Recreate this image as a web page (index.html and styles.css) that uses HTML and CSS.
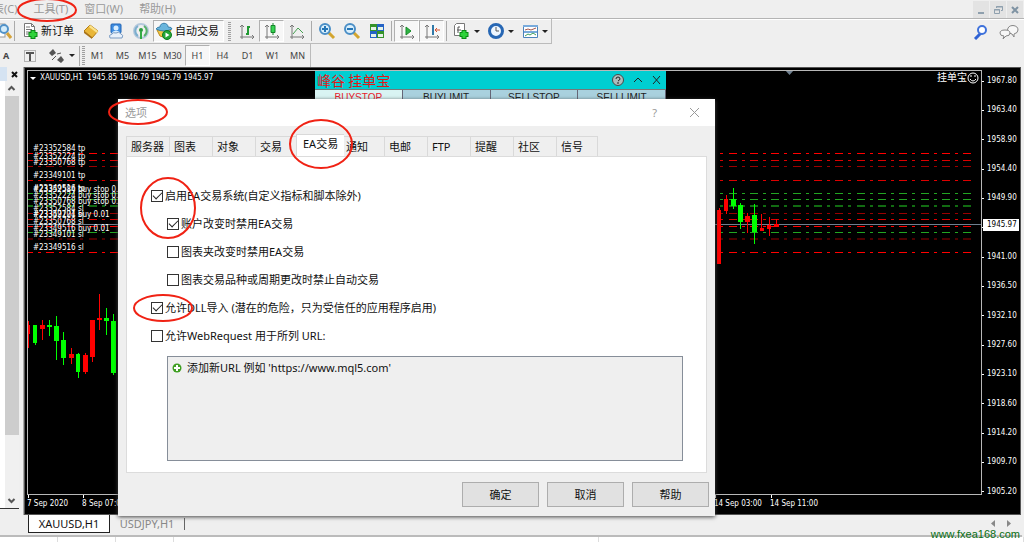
FILE: index.html
```html
<!DOCTYPE html>
<html lang="zh-CN">
<head>
<meta charset="utf-8">
<title>XAUUSD,H1</title>
<link rel="stylesheet" href="styles.css">
</head>
<body>
<div class="app">
  <nav class="menubar">
    <button class="menu menu-cut">表(C)</button>
    <button class="menu">工具(T)</button>
    <button class="menu">窗口(W)</button>
    <button class="menu">帮助(H)</button>
    <div class="window-controls">
      <button aria-label="最小化"><svg width="16" height="16"><path d="M5 11h6" stroke="#8fa0ae" stroke-width="2"/></svg></button>
      <button aria-label="还原"><svg width="16" height="16" fill="none" stroke="#8fa0ae"><path d="M6.500 6V4.500h6v4H11M6 5h7" /><path d="M4.500 7.500h5v4h-5zM4 8h6"/></svg></button>
      <button aria-label="关闭"><svg width="16" height="16"><path d="M5 5l6 6M11 5l-6 6" stroke="#7f93a3" stroke-width="2"/></svg></button>
    </div>
  </nav>

  <div class="toolbars">
    <div class="toolbar toolbar-main">
      <button class="tool tool-cut" aria-label="查找"><svg width="16" height="18"><rect x="0" y="2" width="9" height="13" fill="#fff" stroke="#999"/><circle cx="8" cy="7" r="4" fill="#d4ecfa" stroke="#5292c8" stroke-width="2"/><path d="M11 11l4 5" stroke="#d5a33a" stroke-width="3"/></svg></button>
      <span class="divider"></span>
      <button class="tool-text"><svg width="16" height="18"><path d="M1.500 1.500h7l3 3v10h-10z" fill="#fff" stroke="#777"/><path d="M8.500 1.500v3h3M3 5h4M3 7.500h6M3 10h5M3 12h3" stroke="#777" fill="none"/><path d="M10 8v9M5.500 12.500h9" stroke="#0b8a16" stroke-width="5"/><path d="M10 9v7M6.500 12.500h7" stroke="#2fd33b" stroke-width="3"/></svg>新订单</button>
      <button class="tool" aria-label="历史"><svg width="18" height="18"><path d="M2 9l6-6 8 6-6 7z" fill="#e9b638" stroke="#b37d14"/><path d="M8 3l8 6-1 2-8-6z" fill="#fbe38c"/><path d="M2 9l8 6v2l-8-6z" fill="#a87318"/></svg></button>
      <button class="tool" aria-label="用户"><svg width="18" height="18"><rect x="4" y="2" width="10" height="9" rx="1" fill="#3f8de0" stroke="#2365b5"/><circle cx="9" cy="6" r="2.500" fill="#d9eeff"/><path d="M5 11c1-3 7-3 8 0z" fill="#d9eeff"/><path d="M3 16q-2-3 2-4 1-2 4-1 3-2 5 1 3 1 1 4z" fill="#e9f1fa" stroke="#7a9bc2"/></svg></button>
      <button class="tool" aria-label="信号"><svg width="18" height="18" fill="none"><circle cx="9" cy="9" r="7" stroke="#b4c8dc" stroke-width="2"/><path d="M6 14a6 6 0 010-10" stroke="#7cafce" stroke-width="2"/><path d="M12 4a6 6 0 010 10" stroke="#58b06b" stroke-width="2"/><circle cx="9" cy="8" r="2" fill="#2a9b3e"/><path d="M9 9v8" stroke="#35ab45" stroke-width="2"/></svg></button>
      <button class="tool-text pressed"><svg width="18" height="18"><path d="M2 8l3 6 6 2 5-8z" fill="#f2c743" stroke="#bb8a1b"/><path d="M1 7q1-2 4-2c0-5 8-5 8 0q4 0 4 2-8 4-16 0z" fill="#69b5dc" stroke="#367fab"/><circle cx="12" cy="13" r="4.500" fill="#26a637" stroke="#0d7c1e"/><path d="M10.500 10.500l4 2.500-4 2.500z" fill="#fff"/></svg>自动交易</button>
      <span class="grip"></span>
      <button class="tool" aria-label="柱状图"><svg width="18" height="18" fill="none"><path d="M4 3v12h12M2 5l2-2 2 2M14 13l2 2-2 2M2 15h2v2" stroke="#777"/><path d="M8 12h2V5h2" stroke="#229a33" stroke-width="2"/></svg></button>
      <button class="tool pressed" aria-label="蜡烛图"><svg width="18" height="18" fill="none"><path d="M4 3v12h12M2 5l2-2 2 2M14 13l2 2-2 2M2 15h2v2" stroke="#777"/><path d="M10 1v12" stroke="#16852a"/><path d="M8 3.500h4v7H8z" fill="#35d452" stroke="#16852a"/></svg></button>
      <button class="tool" aria-label="折线图"><svg width="18" height="18" fill="none"><path d="M4 3v12h12M2 5l2-2 2 2M14 13l2 2-2 2M2 15h2v2" stroke="#777"/><path d="M5 12l5-6 5 5" stroke="#43a04f"/></svg></button>
      <span class="divider"></span>
      <button class="tool" aria-label="放大"><svg width="18" height="18"><path d="M10 10l6 6" stroke="#d3a52f" stroke-width="3"/><circle cx="7" cy="7" r="5" fill="#d9effc" stroke="#4a8ec6" stroke-width="2"/><path d="M4 7h6M7 4v6" stroke="#2475b6" stroke-width="2"/></svg></button>
      <button class="tool" aria-label="缩小"><svg width="18" height="18"><path d="M10 10l6 6" stroke="#d3a52f" stroke-width="3"/><circle cx="7" cy="7" r="5" fill="#d9effc" stroke="#4a8ec6" stroke-width="2"/><path d="M4 7h6" stroke="#2475b6" stroke-width="2"/></svg></button>
      <button class="tool" aria-label="平铺"><svg width="18" height="18"><path d="M2 2h7v7H2zM9 9h7v7H9z" fill="#35932a"/><path d="M9 2h7v7H9zM2 9h7v7H2z" fill="#2362c5"/><path d="M3 5h5v3H3zM10 5h5v3h-5zM3 12h5v3H3zM10 12h5v3h-5z" fill="#e4f2e7"/></svg></button>
      <span class="divider"></span>
      <button class="tool pressed" aria-label="自动滚动"><svg width="18" height="18" fill="none"><path d="M4 3v12h12M2 5l2-2 2 2M14 13l2 2-2 2M2 15h2v2" stroke="#777"/><path d="M8 5l5 4-5 4z" fill="#2fb443" stroke="#198a2b"/></svg></button>
      <button class="tool pressed" aria-label="图表平移"><svg width="18" height="18" fill="none"><path d="M4 3v12h12M2 5l2-2 2 2M14 13l2 2-2 2M2 15h2v2" stroke="#777"/><path d="M10 3v10" stroke="#3179a8" stroke-width="2"/><path d="M17 8h-5M14 6l-2 2 2 2" stroke="#d35230"/></svg></button>
      <span class="divider"></span>
      <button class="tool tool-drop" aria-label="指标"><svg width="18" height="18"><path d="M3.500 1.500h8v12h-10v-10z" fill="#fff" stroke="#777"/><path d="M5 11V5h2M4 8h4" stroke="#555" fill="none"/><path d="M11 8v9M6.500 12.500h9" stroke="#0b8a16" stroke-width="5"/><path d="M11 9v7M7.500 12.500h7" stroke="#2fd33b" stroke-width="3"/></svg><i class="caret"></i></button>
      <button class="tool tool-drop" aria-label="周期"><svg width="18" height="18"><circle cx="9" cy="9" r="6.500" fill="#edf6ff" stroke="#2767b4" stroke-width="3"/><path d="M9 5v4h3" stroke="#555" fill="none"/></svg><i class="caret"></i></button>
      <button class="tool tool-drop" aria-label="模板"><svg width="18" height="18" fill="none"><path d="M2.500 3.500h14v12h-14z" fill="#fff" stroke="#4b83bc"/><path d="M2 4h15M3 10h13" stroke="#79abdc" stroke-width="2"/><path d="M4 8l3-1 3 1 5-2" stroke="#a6574b"/><path d="M4 14l3-2 2 1 3-2 3 2" stroke="#3d9e5b"/></svg><i class="caret"></i></button>
      <span class="toolbar-end"></span>
    </div>
    <div class="toolbar-right">
      <button aria-label="搜索"><svg width="16" height="16"><path d="M8 9l-6 6" stroke="#2f62d4" stroke-width="3"/><circle cx="9" cy="6" r="4" fill="#fff" stroke="#3f72db" stroke-width="2"/></svg></button>
      <button aria-label="聊天"><svg width="20" height="16" fill="#f7f7f7" stroke="#858585"><path d="M13 10l2 3v-3q4-1 4-4 0-4-5-4.500-5 0-5.500 4.500 1 4 4.500 4z"/><path d="M5 12l-1 3 3-3q4 0 4-3 0-3-5-3-5 0-5 3 0 3 4 3z"/></svg></button>
    </div>
    <div class="toolbar toolbar-frames">
      <button class="tool tool-cut text-tool">A</button>
      <button class="tool tool-t" aria-label="文本标签"><svg width="16" height="16"><path d="M2.500 2.500h11v11h-11z" fill="none" stroke="#777" stroke-dasharray="1 1"/><path d="M4 5h8M8 5v8" stroke="#555" stroke-width="2"/></svg></button>
      <button class="tool tool-drop" aria-label="箭头"><svg width="18" height="16"><path d="M1 5l4-4 3 4-4 3zM9 12l4-4 3 4-3 3z" fill="#555"/><path d="M9 6l4-1M4 12l4-4" stroke="#555"/></svg><i class="caret"></i></button>
      <span class="divider"></span><span class="grip"></span>
      <button class="frame">M1</button><button class="frame">M5</button><button class="frame">M15</button><button class="frame">M30</button><button class="frame pressed">H1</button><button class="frame">H4</button><button class="frame">D1</button><button class="frame">W1</button><button class="frame">MN</button>
      <span class="toolbar-end"></span>
    </div>
  </div>

  <main class="workspace">
    <aside class="side">
      <div class="side-head"><span></span><button aria-label="关闭面板"><svg width="9" height="9"><path d="M2 2l5 5M7 2L2 7" stroke="#111" stroke-width="2"/></svg></button></div>
      <div class="side-body">
        <div class="scrollbar">
          <svg width="13" height="15"><path d="M3.500 9l3-3 3 3" fill="none" stroke="#555" stroke-width="2"/></svg>
          <div class="thumb"></div>
          <svg width="13" height="15"><path d="M3.500 6l3 3 3-3" fill="none" stroke="#555" stroke-width="2"/></svg>
        </div>
      </div>
      <div class="side-foot"></div>
    </aside>

    <section class="chart">
      <div class="plot">
        <svg class="drawing" aria-hidden="true">
          <g transform="translate(-28 -71)">
            <g class="levels">
              <path class="hi" d="M25 153.500H976M25 226.500H976M25 252.500H976"/>
              <path class="mid" d="M25 160.500H976M25 180.500H976M25 219.500H976"/>
              <path class="low" d="M25 166.500H976M25 213.500H976M25 239H976"/>
              <path class="go" d="M25 193.500H976M25 199.500H976M25 232.500H976"/>
              <path class="go-low" d="M25 206H976"/>
            </g>
            <path d="M27 224.500H982" stroke="#708090"/>
            <g stroke="#f00"><path d="M28.500 321v27M42.500 320v20M71.500 348v16M85.500 353v21M92.500 320v42M99.500 294v36M719.500 208v56M726.500 195v19M747.500 213v20M761.500 214v17M769.500 217v19M776.500 219v8"/></g>
            <path fill="#f00" d="M27 325h3v9h-3zM40 325h5v4h-5zM69 354h5v4h-5zM83 355h5v17h-5zM90 320h5v37h-5zM97 318h5v2h-5zM717 210h4v54h-4zM724 199h4v12h-4zM745 216h5v6h-5zM760 228h4v3h-4zM767 225h4v4h-4zM774 224h5v2h-5z"/>
            <path stroke="#0f0" d="M35.500 325v20M49.500 320v16M56.500 316v44M63.500 332v33M78.500 353v25M106.500 308v27M113.500 314v61M733.500 188v21M740.500 203v26M754.500 204v40"/>
            <path fill="#0f0" d="M33 325h4v18h-4zM47 325h5v2h-5zM54 326h5v15h-5zM61 340h5v18h-5zM76 354h4v18h-4zM104 318h5v3h-5zM111 321h5v52h-5zM731 199h5v7h-5zM738 205h5v17h-5zM752 215h5v17h-5z"/>
            <path d="M785 70h9l-4.500 5z" fill="#708090"/>
            <g class="orders">
              <text x="33" y="151">#23352584 tp</text><text x="33" y="159">#23352224 tp</text><text x="33" y="165">#23350768 tp</text><text x="33" y="178">#23349101 tp</text><text x="33" y="191">#23349516 tp</text><text x="33" y="192">#23352584 buy stop 0.01</text><text x="33" y="198">#23352224 buy stop 0.01</text><text x="33" y="204">#23350768 buy stop 0.01</text><text x="33" y="211">#23352584 sl</text><text x="33" y="217">#23352224 sl</text><text x="33" y="217">#23349101 buy 0.01</text><text x="33" y="224">#23350768 sl</text><text x="33" y="231">#23349516 buy 0.01</text><text x="33" y="237">#23349101 sl</text><text x="33" y="250">#23349516 sl</text>
            </g>
          </g>
        </svg>
        <div class="plot-head">
          <i class="caret caret-white"></i><span>XAUUSD,H1&nbsp; 1945.85 1946.79 1945.79 1945.97</span>
          <span class="expert">挂单宝</span><svg width="12" height="12" fill="none" stroke="#fff"><circle cx="6" cy="6" r="5"/><path d="M4 3v2M8 3v2M3 7q3 4 6 0"/></svg>
        </div>
        <div class="trade-panel">
          <div class="trade-head"><span>峰谷 挂单宝</span>
            <svg width="14" height="14"><circle cx="7" cy="7" r="5.500" fill="#aebcbc" stroke="#484848"/><path d="M5 6q0-2 2-2t2 2q0 1-2 2M7 9v2" fill="none" stroke="#222"/></svg>
            <svg width="10" height="14"><path d="M1 9l4-4 4 4" fill="none" stroke="#222"/></svg>
            <svg width="10" height="14"><path d="M2 3l7 8M9 3l-7 8" fill="none" stroke="#222"/></svg>
          </div>
          <div class="trade-tabs"><button class="current">BUYSTOP</button><button>BUYLIMIT</button><button>SELLSTOP</button><button>SELLLIMIT</button></div>
        </div>
      </div>
      <div class="prices">
        <span>1967.80</span><span>1963.40</span><span>1958.90</span><span>1954.40</span><span>1949.90</span><span>1945.50</span><span>1941.00</span><span>1936.50</span><span>1932.10</span><span>1927.60</span><span>1923.10</span><span>1918.60</span><span>1914.20</span><span>1909.70</span><span>1905.20</span>
        <b class="last-price">1945.97</b>
      </div>
      <div class="times"><span>7 Sep 2020</span><span>8 Sep 07:00</span><span class="time-late">14 Sep 03:00</span><span>14 Sep 11:00</span></div>
    </section>

    <div class="dialog" role="dialog" aria-labelledby="dialog-title">
      <header class="dialog-head">
        <h1 id="dialog-title">选项</h1>
        <button aria-label="帮助说明">?</button>
        <button aria-label="关闭对话框"><svg width="11" height="11"><path d="M1 1l9 9M10 1l-9 9" stroke="#999"/></svg></button>
      </header>
      <div class="dialog-body">
        <div class="tabs" role="tablist">
          <button role="tab">服务器</button><button role="tab">图表</button><button role="tab">对象</button><button role="tab">交易</button><button role="tab" class="current" aria-selected="true">EA交易</button><button role="tab">通知</button><button role="tab">电邮</button><button role="tab">FTP</button><button role="tab">提醒</button><button role="tab">社区</button><button role="tab">信号</button>
        </div>
        <div class="tab-page">
          <label class="option"><input type="checkbox" checked>启用EA交易系统(自定义指标和脚本除外)</label>
          <label class="option nested"><input type="checkbox" checked>账户改变时禁用EA交易</label>
          <label class="option nested"><input type="checkbox">图表夹改变时禁用EA交易</label>
          <label class="option nested"><input type="checkbox">图表交易品种或周期更改时禁止自动交易</label>
          <label class="option"><input type="checkbox" checked>允许DLL导入 (潜在的危险，只为受信任的应用程序启用)</label>
          <label class="option"><input type="checkbox">允许WebRequest 用于所列 URL:</label>
          <div class="url-list"><div class="url-row"><svg width="10" height="10"><circle cx="5" cy="5" r="4.500" fill="#3f9f22"/><path d="M5 2v6M2 5h6" stroke="#fff" stroke-width="2"/></svg>添加新URL 例如 'https://www.mql5.com'</div></div>
        </div>
        <footer class="actions"><button>确定</button><button>取消</button><button>帮助</button></footer>
      </div>
    </div>
  </main>

  <div class="chart-tabs">
    <button class="current">XAUUSD,H1</button><button class="other">USDJPY,H1</button><span class="tab-end"></span>
    <span class="tab-arrows"><svg width="5" height="7"><path d="M5 0v7L1 3.500z" fill="#888"/></svg><svg width="5" height="7"><path d="M0 0v7l4-3.500z" fill="#888"/></svg></span>
  </div>
  <div class="status"><span></span><span></span><span></span><span class="wide"></span><span class="rest"></span></div>

  <svg class="marks" aria-hidden="true">
    <ellipse cx="47" cy="10" rx="29" ry="11"/>
    <ellipse cx="138" cy="112" rx="29" ry="12"/>
    <ellipse cx="321" cy="144" rx="31" ry="24"/>
    <ellipse cx="168" cy="208" rx="27" ry="30"/>
    <ellipse cx="163" cy="308" rx="29" ry="13"/>
  </svg>
  <a class="site" href="#">www.fxea168.com</a>
</div>
</body>
</html>
```
FILE: styles.css
```css
* { box-sizing: border-box; }
body { margin: 0; font: 11px/16px "Noto Sans", "Noto Sans CJK SC", sans-serif; color: #111; background: #efefef; }
button { margin: 0; padding: 0; border: 0; background: none; font: inherit; color: inherit; }
svg { display: block; flex: none; }

.app { position: relative; display: flex; flex-direction: column; height: 100vh; overflow: hidden; }

.menubar { display: flex; gap: 16px; height: 18px; color: #999; }
.menu { white-space: nowrap; }
.menu-cut { margin-left: -7px; }
.window-controls { display: flex; gap: 1px; margin-left: auto; padding: 1px 1px 0 0; }
.window-controls button { background: #e3e3e3; }

.toolbars { display: grid; grid-template-columns: 1fr auto; grid-template-rows: 25px 23px; border-top: 1px solid #b4b4b4; box-shadow: inset 0 1px #fff; }
.toolbar { display: flex; align-items: center; }
.toolbar-main { justify-self: start; border-bottom: 1px solid #bbb; }
.toolbar-frames { grid-column: 1 / -1; font-size: 9px; color: #444; }
.toolbar-right { display: flex; align-items: center; gap: 10px; padding-right: 5px; }
.tool { display: flex; align-items: center; justify-content: center; width: 25px; height: 22px; }
.tool-cut { width: 14px; justify-content: flex-start; margin-left: -4px; }
.tool-cut + .divider { margin-left: 4px; }
.text-tool { margin-left: 0; padding-left: 3px; font-weight: bold; }
.tool-t { width: 31px; }
.tool-drop { width: 34px; gap: 3px; }
.tool-text { display: flex; align-items: center; gap: 2px; height: 22px; padding: 0 4px 0 6px; white-space: nowrap; }
.tool-text.pressed { padding: 0 4px 0 1px; }
.pressed { border: 1px solid; border-color: #b0b0b0 #fff #fff #b0b0b0; background: #f7f7f7; }
.divider { width: 1px; height: 20px; margin: 0 2px; background: #aaa; }
.grip { width: 3px; height: 19px; margin: 0 3px 0 4px; background: repeating-linear-gradient(#a0a0a0 0 1px, #eee 1px 2px); }
.toolbar-end { width: 1px; align-self: stretch; background: #bbb; }
.toolbar-frames .tool-drop { width: 32px; }
.toolbar-frames .grip { margin: 0; }
.frame { width: 25px; height: 21px; }
.caret { border: 3px solid transparent; border-top: 3px solid #222; border-bottom: 0; }
.caret-white { border-top-color: #fff; }

.workspace { position: relative; display: flex; flex: 1; min-height: 0; }
.side { display: flex; flex-direction: column; width: 24px; border-right: 1px solid #aaa; }
.side-head { display: flex; justify-content: space-between; align-items: center; height: 14px; margin-right: 4px; }
.side-head span { width: 7px; align-self: stretch; background: #d5e3f2; }
.side-body { display: flex; flex: 1; margin-right: 4px; justify-content: flex-end; background: #fff; border-bottom: 1px solid #333; }
.scrollbar { display: flex; flex-direction: column; width: 14px; background: #f0f0f0; }
.thumb { flex: 1; margin-bottom: 58px; background: #cdcdcd; }
.side-foot { height: 6px; }

.chart { display: grid; flex: 1; min-width: 0; grid-template-columns: 1fr 38px; grid-template-rows: 1fr 19px; margin-right: 3px; padding: 2px 0 0 2px; border: 1px solid #555; background: #000; color: #fff; font: 8px/12px "DejaVu Sans Condensed", "Noto Sans CJK SC", sans-serif; }
.plot { position: relative; min-width: 0; border: 1px solid #b8b8b8; overflow: hidden; }
.drawing { position: absolute; inset: 0; width: 100%; height: 100%; }
.levels { stroke-dasharray: 8 5 3 5 8 5 3 5 8 5 3 6; }
.hi { stroke: #f00; }
.mid { stroke: #d00; }
.low { stroke: #900; }
.go { stroke: #22a522; }
.go-low { stroke: #126b12; stroke-width: 2; }
.orders { fill: #fff; }
.plot-head { position: relative; display: flex; align-items: center; gap: 4px; padding: 1px 2px; }
.expert { margin: 0 -4px 0 auto; font-size: 10px; }
.trade-panel { position: absolute; left: 287px; top: 0; width: 351px; }
.trade-head { display: flex; align-items: center; gap: 8px; height: 18px; padding: 0 5px 0 2px; background: #00ced1; }
.trade-head span { margin-right: auto; color: #e01818; font: 14px/18px "Noto Sans CJK SC", sans-serif; }
.trade-tabs { display: flex; border-top: 1px solid #777; }
.trade-tabs button { flex: 1; height: 16px; border-right: 1px solid #667; background: #a9d1de; color: #222; font: 10px/16px "Liberation Sans", sans-serif; }
.trade-tabs .current { background: #d9f4f3; color: #e8202c; }
.prices { position: relative; display: flex; flex-direction: column; justify-content: space-between; padding: 5px 0 0; margin-bottom: -3px; }
.prices span { display: flex; align-items: center; gap: 3px; }
.prices span::before { content: ""; width: 2px; height: 1px; background: #fff; }
.last-price { position: absolute; left: 1px; top: 149px; width: 36px; padding-left: 4px; background: #fff; color: #000; font-weight: normal; }
.times { grid-column: 1 / -1; display: flex; gap: 14px; padding-top: 3px; white-space: nowrap; }
.times span { position: relative; }
.times span::before { content: ""; position: absolute; left: 1px; top: -3px; width: 1px; height: 3px; background: #fff; }
.time-late { margin-left: auto; }
.times span:last-child { margin: 0 202px 0 -6px; }

.dialog { position: absolute; left: 118px; top: 32px; width: 597px; max-width: 100%; background: #efefef; box-shadow: 0 1px 4px #444; }
.dialog-head { display: flex; align-items: center; gap: 32px; height: 27px; padding: 0 15px 0 7px; background: #fff; color: #999; }
.dialog-head h1 { margin: 0 auto 0 0; font: inherit; }
.dialog-body { padding: 8px 6px 9px 8px; }
.tabs { display: flex; align-items: flex-end; height: 22px; }
.tabs button { width: 43px; height: 20px; padding-left: 4px; text-align: left; white-space: nowrap; border: 1px solid #d9d9d9; border-width: 1px 0 0 1px; }
.tabs button:last-child { width: 42px; border-right-width: 1px; }
.tabs .current { height: 22px; width: 48px; padding: 0 0 3px 6px; margin: 0 -3px 0 -2px; background: #fff; position: relative; }
.tab-page { margin-right: 2px; padding: 25px 23px 11px 24px; border: 1px solid #dcdcdc; background: #fff; }
.option { display: flex; align-items: center; gap: 2px; height: 28px; white-space: nowrap; }
.nested { padding-left: 16px; }
.option input { appearance: none; width: 12px; height: 12px; margin: 0; border: 1px solid #333; background: #fff; display: grid; place-items: center; }
.option input:checked::before { content: ""; width: 8px; height: 4px; margin-bottom: 3px; border: solid #222; border-width: 0 0 1px 1px; transform: rotate(-45deg); }
.url-list { height: 105px; margin: 6px 0 0 16px; padding: 3px 4px; border: 1px solid #868e99; background: #efefef; }
.url-row { display: flex; align-items: center; gap: 5px; }
.actions { display: flex; justify-content: flex-end; gap: 8px; padding-top: 9px; }
.actions button { width: 77px; height: 25px; border: 1px solid #adadad; background: #e1e1e1; }

.chart-tabs { display: flex; align-items: flex-start; height: 22px; padding: 0 10px 0 24px; margin-right: 2px; border-bottom: 2px solid #bbb; }
.chart-tabs .current { width: 82px; height: 18px; margin-left: 4px; border: 1px solid #222; border-top: 0; background: #fff; }
.chart-tabs .other { width: 74px; height: 18px; color: #888; }
.tab-end { width: 1px; height: 12px; margin-top: 3px; background: #666; }
.tab-arrows { display: flex; gap: 12px; margin: 5px 0 0 auto; }
.status { display: flex; height: 5px; background: #fff; }
.status span { width: 58px; border-right: 1px solid #ddd; }
.status .wide { flex: 1; max-width: 605px; }
.status .rest { flex: 1; }

.marks { position: absolute; inset: 0; width: 100%; height: 100%; pointer-events: none; fill: none; stroke: #f02214; stroke-width: 2; }
.site { position: absolute; right: 4px; bottom: 0; color: #086e12; text-decoration: none; font: 11px/16px "Liberation Sans", sans-serif; }
```
